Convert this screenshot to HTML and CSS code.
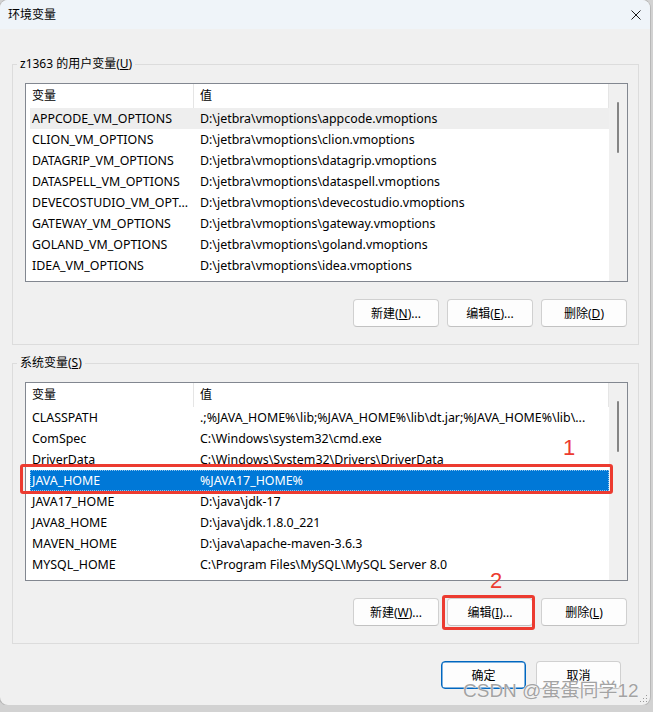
FILE: index.html
```html
<!DOCTYPE html>
<html lang="zh-CN">
<head>
    <meta charset="UTF-8">
    <title>环境变量</title>
    <link rel="stylesheet" href="styles.css">
</head>
<body>
    <div class="window">
        <div class="titlebar">
            <span class="title">环境变量</span>
            <span class="close">
                <svg width="10" height="10" viewBox="0 0 10 10"><path d="M0.5 0.5 L9.5 9.5 M9.5 0.5 L0.5 9.5" stroke="#1b1b1b" stroke-width="1" fill="none"/></svg>
            </span>
        </div>

        <div class="content">
            <!-- user variables -->
            <fieldset class="group">
                <legend>z1363 的用户变量(<u>U</u>)</legend>
                <div class="list">
                    <div class="list-body">
                        <div class="list-head">
                            <div class="head-name">变量</div>
                            <div class="head-value">值</div>
                        </div>
                        <div class="row inactive"><div class="col-name">APPCODE_VM_OPTIONS</div><div class="col-value">D:\jetbra\vmoptions\appcode.vmoptions</div></div>
                        <div class="row"><div class="col-name">CLION_VM_OPTIONS</div><div class="col-value">D:\jetbra\vmoptions\clion.vmoptions</div></div>
                        <div class="row"><div class="col-name">DATAGRIP_VM_OPTIONS</div><div class="col-value">D:\jetbra\vmoptions\datagrip.vmoptions</div></div>
                        <div class="row"><div class="col-name">DATASPELL_VM_OPTIONS</div><div class="col-value">D:\jetbra\vmoptions\dataspell.vmoptions</div></div>
                        <div class="row"><div class="col-name">DEVECOSTUDIO_VM_OPT...</div><div class="col-value">D:\jetbra\vmoptions\devecostudio.vmoptions</div></div>
                        <div class="row"><div class="col-name">GATEWAY_VM_OPTIONS</div><div class="col-value">D:\jetbra\vmoptions\gateway.vmoptions</div></div>
                        <div class="row"><div class="col-name">GOLAND_VM_OPTIONS</div><div class="col-value">D:\jetbra\vmoptions\goland.vmoptions</div></div>
                        <div class="row"><div class="col-name">IDEA_VM_OPTIONS</div><div class="col-value">D:\jetbra\vmoptions\idea.vmoptions</div></div>
                    </div>
                    <div class="scrollbar"><div class="thumb"></div></div>
                </div>
                <div class="actions">
                    <button class="btn">新建(<u>N</u>)...</button>
                    <button class="btn">编辑(<u>E</u>)...</button>
                    <button class="btn">删除(<u>D</u>)</button>
                </div>
            </fieldset>

            <!-- system variables -->
            <fieldset class="group system">
                <legend>系统变量(<u>S</u>)</legend>
                <div class="list">
                    <div class="list-body">
                        <div class="list-head">
                            <div class="head-name">变量</div>
                            <div class="head-value">值</div>
                        </div>
                        <div class="row"><div class="col-name">CLASSPATH</div><div class="col-value">.;%JAVA_HOME%\lib;%JAVA_HOME%\lib\dt.jar;%JAVA_HOME%\lib\...</div></div>
                        <div class="row"><div class="col-name">ComSpec</div><div class="col-value">C:\Windows\system32\cmd.exe</div></div>
                        <div class="row"><div class="col-name">DriverData</div><div class="col-value">C:\Windows\System32\Drivers\DriverData</div></div>
                        <div class="row selected"><div class="col-name">JAVA_HOME</div><div class="col-value">%JAVA17_HOME%</div></div>
                        <div class="row"><div class="col-name">JAVA17_HOME</div><div class="col-value">D:\java\jdk-17</div></div>
                        <div class="row"><div class="col-name">JAVA8_HOME</div><div class="col-value">D:\java\jdk.1.8.0_221</div></div>
                        <div class="row"><div class="col-name">MAVEN_HOME</div><div class="col-value">D:\java\apache-maven-3.6.3</div></div>
                        <div class="row"><div class="col-name">MYSQL_HOME</div><div class="col-value">C:\Program Files\MySQL\MySQL Server 8.0</div></div>
                    </div>
                    <div class="scrollbar"><div class="thumb"></div></div>
                </div>
                <div class="actions">
                    <button class="btn">新建(<u>W</u>)...</button>
                    <button class="btn">编辑(<u>I</u>)...</button>
                    <button class="btn">删除(<u>L</u>)</button>
                </div>
            </fieldset>

            <div class="dialog-actions">
                <button class="btn default">确定</button>
                <button class="btn">取消</button>
            </div>
        </div>

        <!-- red annotations drawn over the screenshot -->
        <div class="mark mark-row"></div>
        <div class="mark mark-btn"></div>
        <span class="mark-num num-1">1</span>
        <span class="mark-num num-2">2</span>

        <span class="watermark">CSDN @蛋蛋同学12</span>

        <svg class="grip" width="10" height="10" viewBox="0 0 10 10">
            <rect x="8" y="2" width="1" height="1" fill="#9a9a9a"/>
            <rect x="5" y="5" width="1" height="1" fill="#9a9a9a"/>
            <rect x="8" y="5" width="1" height="1" fill="#9a9a9a"/>
            <rect x="2" y="8" width="1" height="1" fill="#9a9a9a"/>
            <rect x="5" y="8" width="1" height="1" fill="#9a9a9a"/>
            <rect x="8" y="8" width="1" height="1" fill="#9a9a9a"/>
        </svg>
    </div>
</body>
</html>
```

FILE: styles.css
```css
* {
    margin: 0;
    padding: 0;
    box-sizing: border-box;
}

body {
    background: #d2d2d2;
    font-family: "Noto Sans", "Noto Sans CJK SC", sans-serif;
    font-size: 12px;
    color: #000;
}

.window {
    position: relative;
    width: 650px;
    height: 705px;
    background: #f0f0f0;
    border-radius: 8px;
    overflow: hidden;
    box-shadow: 0 0 0 1px rgba(0, 0, 0, 0.12);
}

.titlebar {
    height: 29px;
    background: #eff4f9;
    display: flex;
    align-items: center;
    justify-content: space-between;
    padding: 0 9px 0 8px;
}

.title {
    line-height: 16px;
}

.close {
    display: flex;
}

.content {
    padding: 27px 11px 0 12px;
}

.group {
    border: 1px solid #dcdcdc;
    padding: 11px 10px 17px 12px;
    min-width: 0;
}

.group legend {
    margin-left: -8px;
    padding: 0 3px;
    line-height: 16px;
}

.group.system {
    margin-top: 10px;
}

.list {
    display: flex;
    height: 199px;
    background: #fff;
    border: 1px solid #828790;
}

.list-body {
    flex: 1;
    min-width: 0;
}

.list-head {
    display: flex;
    height: 24px;
    line-height: 24px;
}

.head-name {
    width: 168px;
    padding-left: 6px;
    border-right: 1px solid #e5e5e5;
}

.head-value {
    flex: 1;
    padding-left: 6px;
    border-right: 1px solid #e5e5e5;
}

.row {
    display: flex;
    height: 21px;
    line-height: 21px;
    margin-left: 4px;
    font-size: 12.4px;
    white-space: nowrap;
}

.row.inactive {
    background: #eeeeee;
}

.row.selected {
    background: #0078d7;
    color: #fff;
    outline: 1px dotted rgba(255, 255, 255, 0.55);
    outline-offset: -1px;
}

.col-name {
    width: 163px;
    padding-left: 2px;
    overflow: hidden;
}

.col-value {
    flex: 1;
    padding-left: 7px;
    overflow: hidden;
}

.scrollbar {
    width: 18px;
    background: #f0f0f0;
    padding-top: 18px;
}

.thumb {
    width: 2px;
    height: 51px;
    margin-left: 8px;
    border-radius: 1px;
    background: #858585;
}

.actions {
    display: flex;
    justify-content: flex-end;
    gap: 8px;
    margin-top: 17px;
    padding-right: 1px;
}

.btn {
    width: 86px;
    height: 28px;
    background: #fdfdfd;
    border: 1px solid #d0d0d0;
    border-bottom-color: #c2c2c2;
    border-radius: 4px;
    font-family: "Noto Sans", "Noto Sans CJK SC", sans-serif;
    font-size: 12px;
    color: #000;
}

.btn.default {
    border: 1px solid #0067c0;
    box-shadow: inset 0 0 0 0.5px #0067c0;
}

.dialog-actions {
    display: flex;
    justify-content: flex-end;
    gap: 10px;
    margin-top: 17px;
    padding-right: 18px;
}

.dialog-actions .btn {
    width: 85px;
}

.mark {
    position: absolute;
    border: 3px solid #ec3b30;
    border-radius: 3px;
}

.mark-row {
    left: 20px;
    top: 464px;
    width: 593px;
    height: 30px;
}

.mark-btn {
    left: 442px;
    top: 595px;
    width: 93px;
    height: 35px;
}

.mark-num {
    position: absolute;
    font-family: "Liberation Sans", sans-serif;
    font-size: 22px;
    line-height: 22px;
    color: #ec3b30;
}

.num-1 {
    left: 563px;
    top: 437px;
}

.num-2 {
    left: 490px;
    top: 570px;
}

.watermark {
    position: absolute;
    left: 463px;
    top: 679px;
    font-family: "Liberation Sans", "Noto Sans CJK SC", sans-serif;
    font-size: 19px;
    line-height: 24px;
    color: #a3a3a3;
    text-shadow: 0 0 1px #fff, 0 0 1px #fff;
    white-space: nowrap;
}

.grip {
    position: absolute;
    right: 2px;
    bottom: 2px;
}
```
